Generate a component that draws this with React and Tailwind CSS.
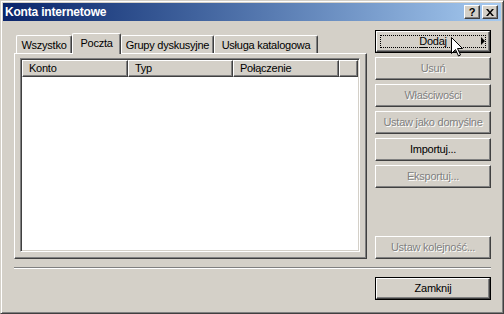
const raised =
  "border border-t-white border-l-white border-r-[#404040] border-b-[#404040] shadow-[inset_-1px_-1px_0_#808080]";

const disabledText = "text-[#808080] [text-shadow:1px_1px_0_#ffffff]";

function Btn({ children, disabled, isDefault, focus, className = "" }) {
  const face = (
    <div className={`relative flex h-full w-full items-center justify-center bg-[#d4d0c8] ${raised}`}>
      {focus && <div className="pointer-events-none absolute inset-[3px] border border-dotted border-black" />}
      <span className={disabled ? disabledText : "text-black"}>{children}</span>
    </div>
  );
  if (isDefault) {
    return <div className={`h-[23px] w-[116px] border border-black ${className}`}>{face}</div>;
  }
  return <div className={`h-[23px] w-[116px] ${className}`}>{face}</div>;
}

function Tab({ label, width, active }) {
  if (active) {
    return (
      <div
        className={`relative z-10 mb-[-1px] flex h-[21px] justify-center rounded-t-[2px] border-t border-l border-r border-t-white border-l-white border-r-[#404040] bg-[#d4d0c8] pt-[2px] shadow-[inset_-1px_0_0_#808080] ${width}`}
      >
        <span className="leading-[14px]">{label}</span>
      </div>
    );
  }
  return (
    <div
      className={`flex h-[18px] justify-center rounded-t-[2px] border-t border-l border-r border-t-white border-l-white border-r-[#404040] bg-[#d4d0c8] pt-[2px] shadow-[inset_-1px_0_0_#808080] ${width}`}
    >
      <span className="leading-[14px]">{label}</span>
    </div>
  );
}

function HeaderCell({ label, width }) {
  return (
    <div className={`flex h-[17px] items-center bg-[#d4d0c8] pl-[6px] ${raised} ${width}`}>
      <span className="leading-[13px]">{label}</span>
    </div>
  );
}

export default function App() {
  return (
    <div className="relative h-[314px] w-[504px] overflow-hidden font-['Liberation_Sans',Arial,sans-serif] text-[11px] tracking-[-0.25px] text-black">
      <div className="flex h-full w-full flex-col border border-t-[#d4d0c8] border-l-[#d4d0c8] border-r-[#404040] border-b-[#404040] bg-[#d4d0c8] p-[2px] shadow-[inset_1px_1px_0_#ffffff,inset_-1px_-1px_0_#808080]">
        {/* title bar */}
        <div className="flex h-[18px] shrink-0 items-center bg-gradient-to-r from-[#0a246a] to-[#a6caf0] pl-[2px] pr-[3px]">
          <span className="flex-1 text-[12px] font-bold tracking-[-0.2px] text-white">Konta internetowe</span>
          <div className="flex gap-[2px]">
            <div className={`flex h-[14px] w-[16px] items-center justify-center bg-[#d4d0c8] ${raised}`}>
              <span className="text-[11px] font-bold leading-none">?</span>
            </div>
            <div className={`flex h-[14px] w-[16px] items-center justify-center bg-[#d4d0c8] ${raised}`}>
              <svg width="8" height="7" viewBox="0 0 8 7">
                <path d="M0 0h2l2 2.4L6 0h2L5 3.5 8 7H6L4 4.6 2 7H0l3-3.5z" fill="#000" />
              </svg>
            </div>
          </div>
        </div>

        {/* body */}
        <div className="flex flex-1 flex-col pl-[11px] pr-[10px] pt-[9px]">
          <div className="flex h-[229px] gap-[8px]">
            <div className="flex w-[353px] flex-col">
              <div className="mt-[3px] flex h-[20px] items-end pl-[2px]">
                <Tab label="Wszystko" width="w-[56px]" />
                <Tab label="Poczta" width="w-[49px]" active />
                <Tab label="Grupy dyskusyjne" width="w-[93px]" />
                <Tab label="Usługa katalogowa" width="w-[104px]" />
              </div>
              <div className="h-[206px] border border-t-white border-l-white border-r-[#404040] border-b-[#404040] pl-[5px] pt-[4px] shadow-[inset_-1px_-1px_0_#808080]">
                <div className="h-[194px] w-[340px] border border-t-[#808080] border-l-[#808080] border-r-white border-b-white bg-white p-[1px] shadow-[inset_1px_1px_0_#404040,inset_-1px_-1px_0_#d4d0c8]">
                  <div className="flex">
                    <HeaderCell label="Konto" width="w-[106px]" />
                    <HeaderCell label="Typ" width="w-[105px]" />
                    <HeaderCell label="Połączenie" width="w-[106px]" />
                    <HeaderCell label="" width="w-[19px]" />
                  </div>
                </div>
              </div>
            </div>

            <div className="flex w-[116px] flex-col">
              <div className="flex flex-col gap-[4px]">
                <div className="relative">
                  <Btn isDefault focus>
                    <span className="underline underline-offset-[2px]">D</span>odaj
                  </Btn>
                  <svg className="absolute right-[6px] top-[7px]" width="4" height="8" viewBox="0 0 4 8">
                    <path d="M0 0L4 4L0 8z" fill="#000" />
                  </svg>
                </div>
                <Btn disabled>Usuń</Btn>
                <Btn disabled>Właściwości</Btn>
                <Btn disabled>Ustaw jako domyślne</Btn>
                <Btn>Importuj...</Btn>
                <Btn disabled>Eksportuj...</Btn>
              </div>
              <Btn disabled className="mt-auto">
                Ustaw kolejność...
              </Btn>
            </div>
          </div>

          <div className="mt-[8px] h-[2px] w-[477px] border-t border-b border-t-[#808080] border-b-white" />

          <div className="mt-[8px] flex justify-end">
            <Btn isDefault>Zamknij</Btn>
          </div>
        </div>
      </div>

      {/* mouse pointer */}
      <svg className="absolute left-[451px] top-[37px]" width="13" height="20" viewBox="0 0 13 20">
        <path
          d="M0.5 0.5L0.5 16.5L4.5 12.5L7.5 19L9.5 18L6.5 11.5L11.5 11.5Z"
          fill="#fff"
          stroke="#000"
          strokeWidth="1"
          strokeLinejoin="miter"
        />
      </svg>
    </div>
  );
}
